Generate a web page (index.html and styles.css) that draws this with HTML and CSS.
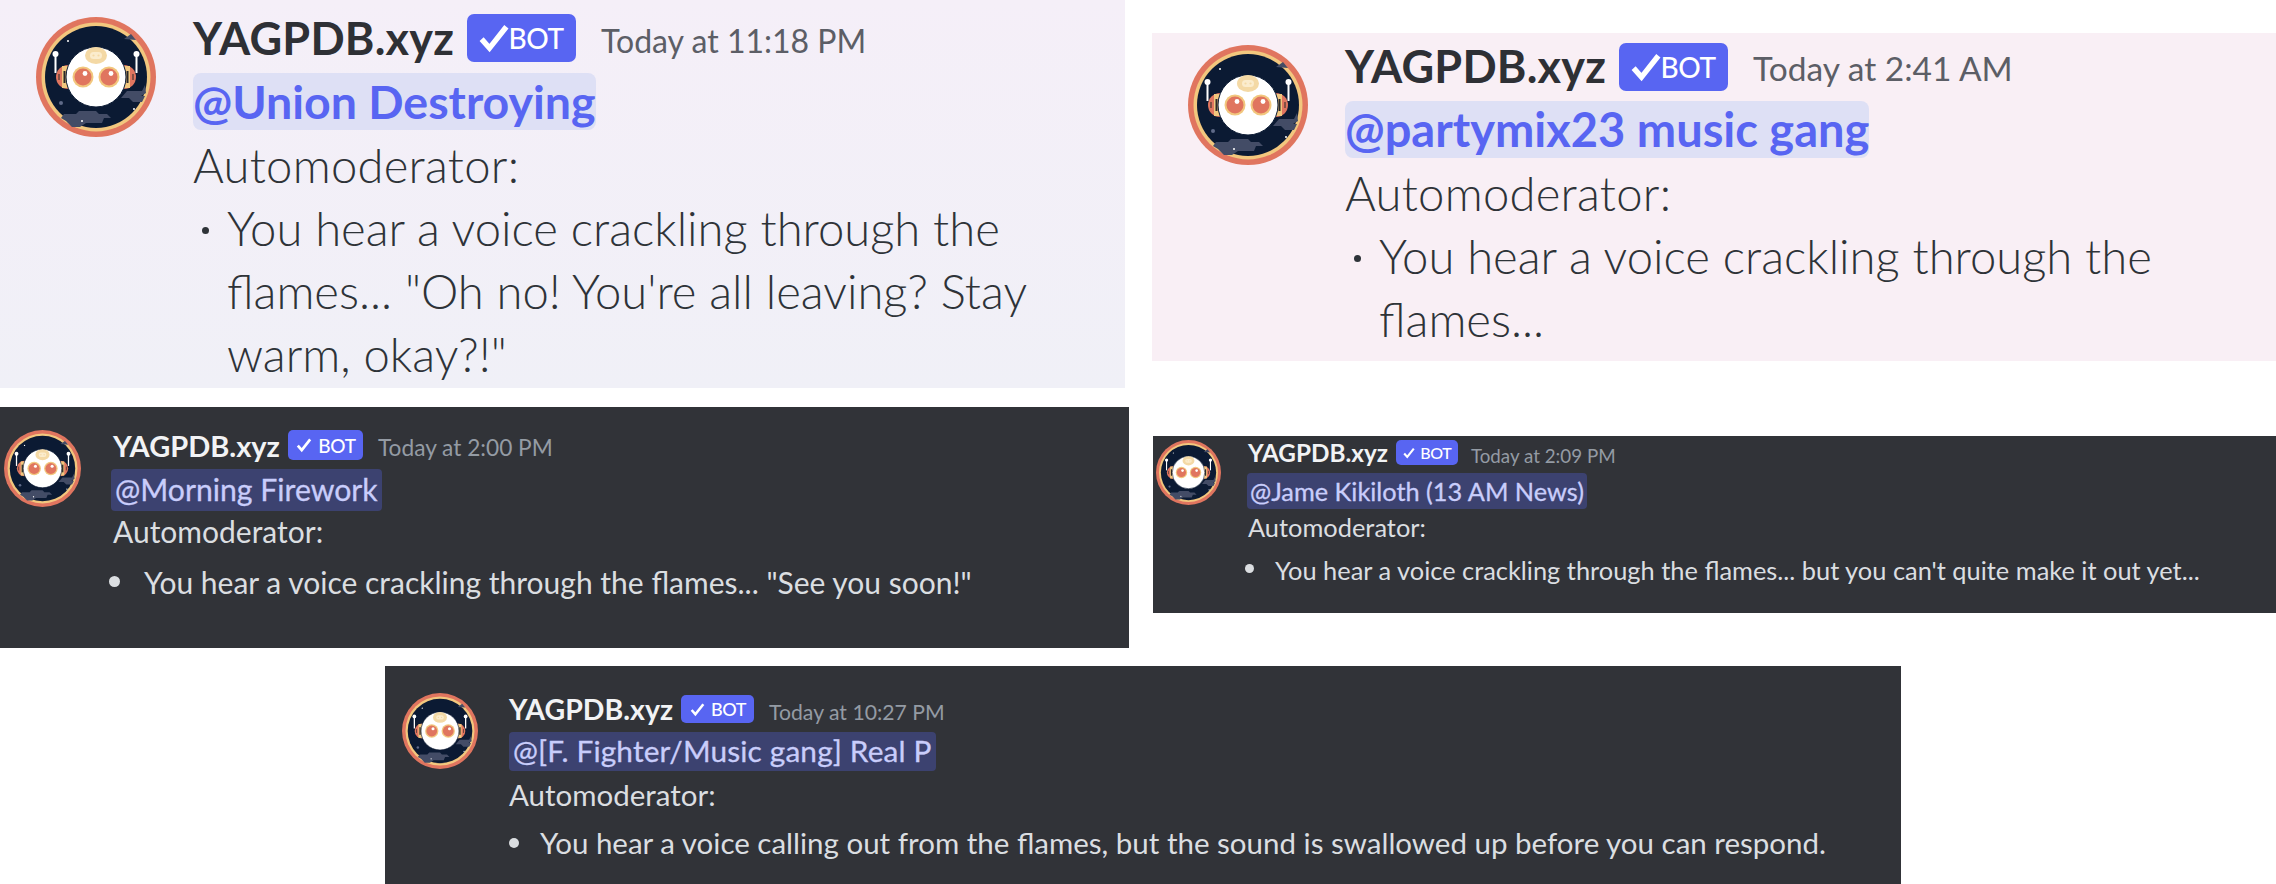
FILE: index.html
```html
<!DOCTYPE html>
<html lang="en">
<head>
  <meta charset="UTF-8" />
  <title>YAGPDB automoderator messages</title>
  <link rel="stylesheet" href="styles.css">
</head>
<body>
  <svg class="defs" width="0" height="0">
    <symbol id="yag" viewBox="0 0 120 120">
      <circle cx="60" cy="60" r="60" fill="#e0755f"/>
      <circle cx="60" cy="60" r="54.5" fill="#f2c77e"/>
      <circle cx="60" cy="60" r="51" fill="#0b1a33"/>
      <path d="M28 97h12l3-3h17l3 3h8l4 4h-7l-2 5H50l-6 4H36l-6-6-5-3z" fill="#434c66"/>
      <path d="M91 74h15l3-6 1 8-5 3h4l-3 6h-9l-4-4h-8z" fill="#434c66"/>
      <path d="M88 22l7-5 5 6z" fill="#434c66"/>
      <circle cx="32" cy="24" r="1" fill="#fff"/>
      <circle cx="25" cy="86" r="2" fill="#5f6a88"/>
      <circle cx="98" cy="92" r="1" fill="#fff"/>
      <circle cx="46" cy="104" r="1" fill="#fff"/>
      <rect x="18.500" y="38" width="2" height="18" fill="#fff"/>
      <rect x="99.500" y="38" width="2" height="18" fill="#fff"/>
      <circle cx="19.500" cy="37" r="3" fill="#fff"/>
      <circle cx="100.500" cy="37" r="3" fill="#fff"/>
      <path d="M32 48a12 12 0 0 0 0 24z" fill="#e0755f"/>
      <path d="M88 48a12 12 0 0 1 0 24z" fill="#e0755f"/>
      <rect x="26" y="49" width="6" height="22" fill="#f2c77e"/>
      <rect x="88" y="49" width="6" height="22" fill="#f2c77e"/>
      <rect x="27.500" y="54" width="2" height="12" fill="#2a2a2a"/>
      <rect x="90.500" y="54" width="2" height="12" fill="#2a2a2a"/>
      <rect x="22.500" y="57" width="1" height="6" fill="#2a2a2a"/>
      <rect x="96.500" y="57" width="1" height="6" fill="#2a2a2a"/>
      <circle cx="60" cy="60" r="30" fill="#fff" stroke="#0b1a33" stroke-width="1"/>
      <ellipse cx="60" cy="38.500" rx="11" ry="8.500" fill="#f4d9a5"/>
      <rect x="54" y="35" width="12" height="7" rx="3.500" fill="#fbeccd"/>
      <circle cx="57.500" cy="38.500" r="1.100" fill="#f4d9a5"/>
      <circle cx="62.500" cy="38.500" r="1.100" fill="#f4d9a5"/>
      <circle cx="47" cy="60" r="10.500" fill="#f2c77e"/>
      <circle cx="73" cy="60" r="10.500" fill="#f2c77e"/>
      <circle cx="47" cy="60" r="8.500" fill="#e0755f"/>
      <circle cx="73" cy="60" r="8.500" fill="#e0755f"/>
      <circle cx="49" cy="56.500" r="2.400" fill="#fff"/>
      <circle cx="75" cy="56.500" r="2.400" fill="#fff"/>
    </symbol>
  </svg>

  <div class="top">
    <div class="col-left">
      <div class="msg light one">
        <svg class="avatar"><use href="#yag"/></svg>
        <div class="body">
          <div class="head">
            <span class="name">YAGPDB.xyz</span>
            <span class="tag"><svg viewBox="0 0 16 16"><path d="M2.500 8.500l3.500 4 7.500-9.500" fill="none" stroke="#fff" stroke-width="2.400"/></svg>BOT</span>
            <span class="time">Today at 11:18 PM</span>
          </div>
          <div class="mention-row"><span class="mention">@Union Destroying</span></div>
          <div class="line">Automoderator:</div>
          <ul class="points">
            <li>You hear a voice crackling through the flames... "Oh no! You're all leaving? Stay warm, okay?!"</li>
          </ul>
        </div>
      </div>

      <div class="msg dark three">
        <svg class="avatar"><use href="#yag"/></svg>
        <div class="body">
          <div class="head">
            <span class="name">YAGPDB.xyz</span>
            <span class="tag"><svg viewBox="0 0 16 16"><path d="M2.500 8.500l3.500 4 7.500-9.500" fill="none" stroke="#fff" stroke-width="2.400"/></svg>BOT</span>
            <span class="time">Today at 2:00 PM</span>
          </div>
          <div class="mention-row"><span class="mention">@Morning Firework</span></div>
          <div class="line">Automoderator:</div>
          <ul class="points">
            <li>You hear a voice crackling through the flames... "See you soon!"</li>
          </ul>
        </div>
      </div>
    </div>

    <div class="col-right">
      <div class="msg light two">
        <svg class="avatar"><use href="#yag"/></svg>
        <div class="body">
          <div class="head">
            <span class="name">YAGPDB.xyz</span>
            <span class="tag"><svg viewBox="0 0 16 16"><path d="M2.500 8.500l3.500 4 7.500-9.500" fill="none" stroke="#fff" stroke-width="2.400"/></svg>BOT</span>
            <span class="time">Today at 2:41 AM</span>
          </div>
          <div class="mention-row"><span class="mention">@partymix23 music gang</span></div>
          <div class="line">Automoderator:</div>
          <ul class="points">
            <li>You hear a voice crackling through the flames...</li>
          </ul>
        </div>
      </div>

      <div class="msg dark four">
        <svg class="avatar"><use href="#yag"/></svg>
        <div class="body">
          <div class="head">
            <span class="name">YAGPDB.xyz</span>
            <span class="tag"><svg viewBox="0 0 16 16"><path d="M2.500 8.500l3.500 4 7.500-9.500" fill="none" stroke="#fff" stroke-width="2.400"/></svg>BOT</span>
            <span class="time">Today at 2:09 PM</span>
          </div>
          <div class="mention-row"><span class="mention">@Jame Kikiloth (13 AM News)</span></div>
          <div class="line">Automoderator:</div>
          <ul class="points">
            <li>You hear a voice crackling through the flames... but you can't quite make it out yet...</li>
          </ul>
        </div>
      </div>
    </div>
  </div>

  <div class="msg dark five">
    <svg class="avatar"><use href="#yag"/></svg>
    <div class="body">
      <div class="head">
        <span class="name">YAGPDB.xyz</span>
        <span class="tag"><svg viewBox="0 0 16 16"><path d="M2.500 8.500l3.500 4 7.500-9.500" fill="none" stroke="#fff" stroke-width="2.400"/></svg>BOT</span>
        <span class="time">Today at 10:27 PM</span>
      </div>
      <div class="mention-row"><span class="mention">@[F. Fighter/Music gang] Real P</span></div>
      <div class="line">Automoderator:</div>
      <ul class="points">
        <li>You hear a voice calling out from the flames, but the sound is swallowed up before you can respond.</li>
      </ul>
    </div>
  </div>
</body>
</html>
```

FILE: styles.css
```css
html, body {
  margin: 0;
  padding: 0;
  background: #fff;
}

body {
  width: 2276px;
  height: 884px;
  overflow: hidden;
  font-family: "Lato", "Noto Sans", sans-serif;
}

.defs {
  display: block;
  height: 0;
}

.top {
  display: flex;
  height: 666px;
}

.col-left {
  width: 1152px;
  flex: none;
}

.col-right {
  flex: 1;
  padding-top: 33px;
}

.msg {
  display: flex;
  box-sizing: border-box;
  overflow: hidden;
}

.avatar {
  display: block;
  flex: none;
}

.head {
  display: flex;
  align-items: center;
  box-sizing: border-box;
}

.tag {
  display: flex;
  align-items: center;
  justify-content: center;
  background: #5865f2;
  color: #fff;
  font-weight: 500;
}

.mention-row {
  display: flex;
  align-items: center;
}

.mention {
  display: block;
  font-weight: 700;
}

.points {
  list-style: none;
  margin: 0;
  padding: 0;
}

.points li {
  display: flex;
}

.points li::before {
  content: "";
  flex: none;
  border-radius: 50%;
}

/* colour schemes */
.light {
  color: #2e3338;
}

.light .name {
  color: #2e3035;
  font-weight: 700;
}

.light .time {
  color: #5c5e66;
}

.light .mention {
  background: #dee0f5;
  color: #5865f2;
}

.light .points li::before {
  background: #2e3338;
}

.dark {
  background: #313338;
  color: #dbdee1;
}

.dark .name {
  color: #f2f3f5;
  font-weight: 700;
}

.dark .time {
  color: #949ba4;
}

.dark .mention {
  background: #3c4270;
  color: #c9cdfb;
  font-weight: 400;
  -webkit-text-stroke: 0.3px #c9cdfb;
}

.dark .tag {
  letter-spacing: -0.3px;
}

.dark .points li::before {
  background: #dbdee1;
}

/* light, large */
.one, .two {
  font-size: 47.200px;
  font-weight: 300;
}

.one .avatar, .two .avatar {
  width: 120px;
  height: 120px;
}

.one .name, .two .name {
  font-size: 45px;
  letter-spacing: 0.2px;
}

.one .tag, .two .tag {
  width: 109px;
  height: 48px;
  margin-left: 13px;
  border-radius: 7px;
  font-size: 28px;
  letter-spacing: -0.5px;
}

.one .tag svg, .two .tag svg {
  width: 36px;
  height: 36px;
  margin: 0 -3px 0 -4px;
}

.one .time, .two .time {
  margin: 5px 0 0 25px;
  font-size: 32px;
  font-weight: 400;
}

.one .mention-row, .two .mention-row {
  height: 58px;
}

.one .mention, .two .mention {
  height: 57px;
  line-height: 57px;
  border-radius: 8px;
  font-size: 46.500px;
}

.one .line, .two .line {
  height: 63px;
  line-height: 63px;
  margin-top: 3px;
  letter-spacing: 0.25px;
}

.one .points, .two .points {
  width: 880px;
  line-height: 63px;
}

.one .points li, .two .points li {
  gap: 18px;
}

.one .points li::before, .two .points li::before {
  width: 7px;
  height: 7px;
  margin: 31px 0 0 9px;
}

.one {
  width: 1125px;
  height: 388px;
  margin-bottom: 19px;
  padding-left: 36px;
  gap: 37px;
  background: linear-gradient(to bottom, #f5eff8, #f0f0f7);
}

.one .avatar {
  margin-top: 17px;
}

.one .head {
  height: 72px;
  padding-top: 4px;
}

.two {
  height: 328px;
  margin-bottom: 75px;
  padding-left: 36px;
  gap: 37px;
  background: #f9eff5;
}

.two .avatar {
  margin-top: 12px;
}

.two .head {
  height: 67px;
}

.two .name {
  margin-top: -2px;
}

.two .time {
  margin-top: 2px;
  font-size: 33.500px;
}

.two .mention {
  font-size: 47px;
}

/* dark screenshots */
.three {
  width: 1129px;
  height: 241px;
  padding-left: 4px;
  gap: 32px;
  font-size: 30px;
}

.three .avatar {
  width: 77px;
  height: 77px;
  margin-top: 23px;
}

.three .head {
  height: 62px;
  padding-top: 14px;
}

.three .name {
  margin-top: 1px;
  font-size: 29px;
}

.three .tag {
  width: 75px;
  height: 30px;
  margin-left: 8px;
  border-radius: 5px;
  font-size: 19px;
  gap: 5px;
}

.three .tag svg {
  width: 18px;
  height: 18px;
}

.three .time {
  margin: 5px 0 0 15px;
  font-size: 22.700px;
}

.three .mention-row {
  height: 42px;
  margin-left: -2px;
}

.three .mention {
  height: 42px;
  line-height: 40px;
  padding: 0 4px;
  border-radius: 4px;
  font-size: 30.200px;
}

.three .line {
  height: 40px;
  line-height: 40px;
}

.three .points {
  margin-top: 11px;
  line-height: 40px;
}

.three .points li {
  gap: 24px;
  margin-left: -4px;
}

.three .points li::before {
  width: 11px;
  height: 11px;
  margin-top: 14px;
}

.four {
  height: 177px;
  margin-left: 1px;
  padding-left: 3px;
  gap: 27px;
  font-size: 25.400px;
}

.four .avatar {
  width: 65px;
  height: 65px;
  margin-top: 4px;
}

.four .head {
  height: 33px;
  margin-bottom: 4px;
}

.four .name {
  font-size: 24.300px;
}

.four .tag {
  width: 62px;
  height: 25px;
  margin-left: 8px;
  border-radius: 5px;
  font-size: 16px;
  gap: 4px;
}

.four .tag svg {
  width: 14px;
  height: 14px;
}

.four .time {
  margin: 6px 0 0 13px;
  font-size: 18.800px;
}

.four .mention-row {
  height: 36px;
  margin-left: -1px;
}

.four .mention {
  height: 36px;
  line-height: 36px;
  padding: 0 3px;
  border-radius: 4px;
  font-size: 25.300px;
}

.four .line {
  height: 36px;
  line-height: 36px;
}

.four .points {
  margin-top: 7px;
  line-height: 36px;
}

.four .points li {
  gap: 21px;
  margin-left: -3px;
}

.four .points li::before {
  width: 9px;
  height: 9px;
  margin-top: 12px;
}

.five {
  width: 1516px;
  height: 218px;
  margin-left: 385px;
  padding-left: 17px;
  gap: 31px;
  font-size: 29.500px;
}

.five .avatar {
  width: 76px;
  height: 76px;
  margin-top: 27px;
}

.five .head {
  height: 66px;
  padding-top: 20px;
}

.five .name {
  font-size: 28.500px;
}

.five .tag {
  width: 73px;
  height: 28px;
  margin-left: 8px;
  border-radius: 5px;
  font-size: 18px;
  gap: 5px;
}

.five .tag svg {
  width: 17px;
  height: 17px;
}

.five .time {
  margin: 5px 0 0 15px;
  font-size: 21.200px;
}

.five .mention-row {
  height: 39px;
}

.five .mention {
  height: 39px;
  line-height: 37px;
  padding: 0 4px;
  border-radius: 4px;
  font-size: 29.800px;
  letter-spacing: 0.15px;
}

.five .line {
  height: 38px;
  line-height: 38px;
  margin-top: 5px;
}

.five .points {
  margin-top: 10px;
  line-height: 38px;
}

.five .points li {
  gap: 21px;
}

.five .points li::before {
  width: 10px;
  height: 10px;
  margin-top: 14px;
}
```
